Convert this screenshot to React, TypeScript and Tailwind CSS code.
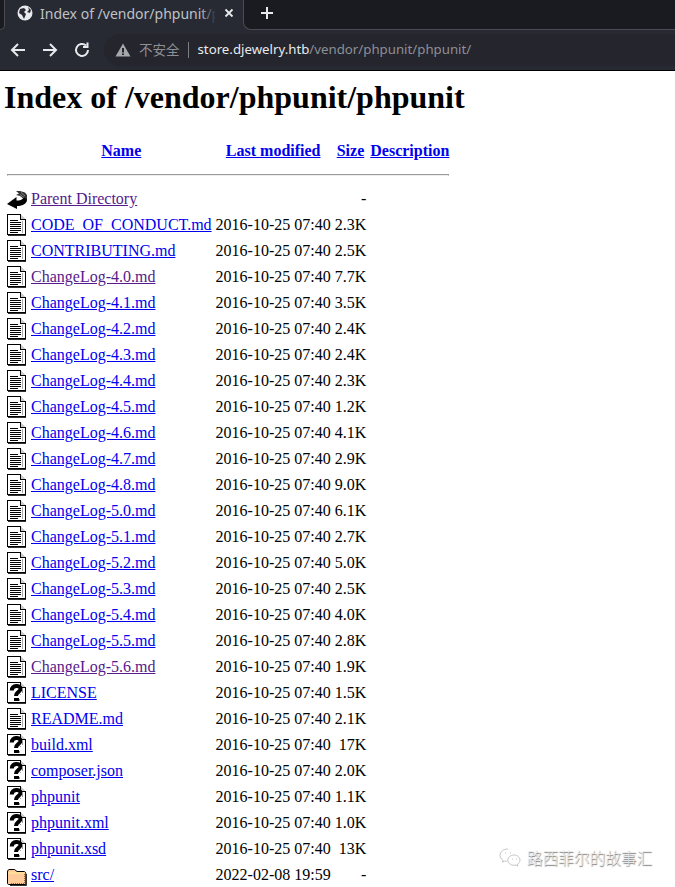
import React from "react";

type Kind = "text" | "unknown" | "back" | "folder" | "blank";

function FileOutline({ children }: { children?: React.ReactNode }) {
  return (
    <>
      <path d="M0.5 0.5H13.5L18.5 5.5V20.5H0.5Z" fill="#fff" stroke="#000" />
      <path d="M13.5 0.5V5.5H18.5" fill="#ccc" stroke="#000" />
      <path d="M1 21.5H19" stroke="#333" />
      {children}
    </>
  );
}

function Icon({ kind }: { kind: Kind }) {
  return (
    <svg width="20" height="22" viewBox="0 0 20 22" className="block" shapeRendering="crispEdges">
      {kind === "text" && (
        <FileOutline>
          <path d="M3 6.5H11M3 8.5H14M3 10.5H14M3 12.5H14M3 14.5H14M3 16.5H14M3 18.5H11" stroke="#000" />
          <path d="M15.5 7V19" stroke="#aaa" />
        </FileOutline>
      )}
      {kind === "unknown" && (
        <FileOutline>
          <path
            d="M4.8 8.5C4.5 3 13.5 2.5 13.5 7C13.5 10 9 10 9 14"
            fill="none"
            stroke="#000"
            strokeWidth="4"
            shapeRendering="auto"
          />
          <rect x="7" y="15.5" width="4.5" height="3.5" fill="#000" />
          <path d="M15.5 5.5V11M13 12V13M12 16.5V19" stroke="#999" />
        </FileOutline>
      )}
      {kind === "back" && (
        <g shapeRendering="auto">
          <path d="M9 3H13L18 4.5L20 7V12L16 10.5L13 8L9 7L12 5.5Z" fill="#333" />
          <path d="M14 4.5L18 8M13 6.5L17 9.5" stroke="#bbb" strokeWidth="0.6" />
          <path d="M0 16L9.5 9V12.5C13 12.5 15 12 17 9.5L20 11.5C20 15.5 16 18 10 18V21Z" fill="#000" />
        </g>
      )}
      {kind === "folder" && (
        <g shapeRendering="auto">
          <path d="M0.5 8C0.5 6 1.5 5.5 3 5.5H7.5L10 7.5H17C18 7.5 18.8 8.5 18.8 9.5V20.5H2C1 20.5 0.5 20 0.5 19Z" fill="#fc9" stroke="#000" />
          <path d="M1 9H17.5" stroke="#fe9" />
          <path d="M19.5 10V21.5H3" fill="none" stroke="#333" />
          <path d="M17.5 10V19.5H3" fill="none" stroke="#964" strokeDasharray="1 1" />
        </g>
      )}
    </svg>
  );
}

type Row = { name: string; date: string; size: string; kind: Kind; visited?: boolean };

const D = "2016-10-25 07:40";
const rows: Row[] = [
  { name: "Parent Directory", date: "\u00a0", size: "-", kind: "back", visited: true },
  { name: "CODE_OF_CONDUCT.md", date: D, size: "2.3K", kind: "text" },
  { name: "CONTRIBUTING.md", date: D, size: "2.5K", kind: "text" },
  { name: "ChangeLog-4.0.md", date: D, size: "7.7K", kind: "text", visited: true },
  { name: "ChangeLog-4.1.md", date: D, size: "3.5K", kind: "text" },
  { name: "ChangeLog-4.2.md", date: D, size: "2.4K", kind: "text" },
  { name: "ChangeLog-4.3.md", date: D, size: "2.4K", kind: "text" },
  { name: "ChangeLog-4.4.md", date: D, size: "2.3K", kind: "text" },
  { name: "ChangeLog-4.5.md", date: D, size: "1.2K", kind: "text" },
  { name: "ChangeLog-4.6.md", date: D, size: "4.1K", kind: "text" },
  { name: "ChangeLog-4.7.md", date: D, size: "2.9K", kind: "text" },
  { name: "ChangeLog-4.8.md", date: D, size: "9.0K", kind: "text" },
  { name: "ChangeLog-5.0.md", date: D, size: "6.1K", kind: "text" },
  { name: "ChangeLog-5.1.md", date: D, size: "2.7K", kind: "text" },
  { name: "ChangeLog-5.2.md", date: D, size: "5.0K", kind: "text" },
  { name: "ChangeLog-5.3.md", date: D, size: "2.5K", kind: "text" },
  { name: "ChangeLog-5.4.md", date: D, size: "4.0K", kind: "text" },
  { name: "ChangeLog-5.5.md", date: D, size: "2.8K", kind: "text" },
  { name: "ChangeLog-5.6.md", date: D, size: "1.9K", kind: "text", visited: true },
  { name: "LICENSE", date: D, size: "1.5K", kind: "unknown" },
  { name: "README.md", date: D, size: "2.1K", kind: "text" },
  { name: "build.xml", date: D, size: "17K", kind: "unknown" },
  { name: "composer.json", date: D, size: "2.0K", kind: "unknown" },
  { name: "phpunit", date: D, size: "1.1K", kind: "unknown" },
  { name: "phpunit.xml", date: D, size: "1.0K", kind: "unknown" },
  { name: "phpunit.xsd", date: D, size: "13K", kind: "unknown" },
  { name: "src/", date: "2022-02-08 19:59", size: "-", kind: "folder" },
];

function Nav({ d }: { d: string }) {
  return (
    <svg width="18" height="18" viewBox="0 0 18 18" fill="none" stroke="#e8eaed" strokeWidth="2">
      <path d={d} />
    </svg>
  );
}

function Chrome() {
  return (
    <div className="bg-[#282a33] font-['Noto_Sans','Noto_Sans_CJK_SC',sans-serif]">
      <div className="flex h-[30px]">
        <div className="h-full w-[5px] rounded-br-lg border-r border-b border-[#4b4c52] bg-[#1a1b20]" />
        <div className="flex h-full w-[238px] items-center pb-[4px] pl-[12px]">
          <svg width="16" height="16" viewBox="0 0 16 16">
            <circle cx="8" cy="8" r="7.5" fill="#e8eaed" />
            <path d="M3 4L7 3L9 5L7 7L9 9L7 14L5 10L2 8ZM11 2L14 5L13 8L10 7L12 5Z" fill="#282a33" />
          </svg>
          <div className="relative ml-[7px] mt-[2px] w-[176px] overflow-hidden text-[14px] leading-[20px] whitespace-nowrap text-[#bfc1c6]">
            Index of /vendor/phpunit/phpunit/
            <div className="absolute top-0 right-0 h-full w-[16px] bg-linear-to-r from-transparent to-[#282a33]" />
          </div>
          <svg width="10" height="10" viewBox="0 0 10 10" className="ml-[8px]" stroke="#e8eaed" strokeWidth="1.8">
            <path d="M1.5 1.5L8.5 8.5M8.5 1.5L1.5 8.5" />
          </svg>
        </div>
        <div className="flex h-full flex-1 items-center rounded-bl-lg border-b border-l border-[#4b4c52] bg-[#1a1b20] pb-[4px] pl-[16px]">
          <svg width="14" height="14" viewBox="0 0 14 14" stroke="#e8eaed" strokeWidth="2">
            <path d="M7 1V13M1 7H13" />
          </svg>
        </div>
      </div>
      <div className="flex h-[41px] items-center border-b border-black pl-[9px]">
        <Nav d="M16 9H3M9 3L3 9L9 15" />
        <div className="w-[14px]" />
        <Nav d="M2 9H15M9 3L15 9L9 15" />
        <div className="w-[14px]" />
        <Nav d="M15 9A6 6 0 1 1 13 4.5M14.5 1.5V6H10" />
        <div className="ml-[13px] flex h-[32px] flex-1 items-center rounded-l-full bg-[#24252d] pl-[11px]">
          <svg width="16" height="14" viewBox="0 0 16 14">
            <path d="M8 0.5L15.5 13.5H0.5Z" fill="#a5a7ab" />
            <path d="M7 5H9V9.5H7ZM7 10.5H9V12H7Z" fill="#24252d" />
          </svg>
          <span className="ml-[8px] text-[13.5px] text-[#8e9095]">不安全</span>
          <span className="ml-[8px] h-[16px] w-px bg-[#7c7e83]" />
          <span className="ml-[9px] text-[13.25px] whitespace-nowrap text-[#e8eaed]">
            store.djewelry.htb<span className="text-[#8e9095]">/vendor/phpunit/phpunit/</span>
          </span>
        </div>
      </div>
    </div>
  );
}

export default function App() {
  return (
    <div className="relative h-[887px] w-[675px] overflow-hidden bg-white">
      <Chrome />
      <div className="px-[4px] font-['Liberation_Serif',serif] text-[16px] leading-[normal] text-black">
        <h1 className="my-[8px] text-[32px] leading-[normal] font-bold">Index of /vendor/phpunit/phpunit</h1>
        <table className="mt-[21px] border-separate border-spacing-[2px]">
          <thead>
            <tr>
              <th className="p-px">
                <div className="h-[22px] w-[20px]" />
              </th>
              {["Name", "Last modified", "Size", "Description"].map((label) => (
                <th key={label} className="p-px text-center font-bold">
                  <a className="text-[#0000ee] underline">{label}</a>
                </th>
              ))}
            </tr>
            <tr>
              <th colSpan={5} className="p-px">
                <hr className="my-[8px] h-[2px] border border-[#9a9a9a] border-b-[#eeeeee]" />
              </th>
            </tr>
          </thead>
          <tbody>
            {rows.map((r) => (
              <tr key={r.name}>
                <td className="p-px align-top">
                  <Icon kind={r.kind} />
                </td>
                <td className="p-px">
                  <a className={r.visited ? "text-[#551a8b] underline" : "text-[#0000ee] underline"}>{r.name}</a>
                </td>
                <td className="p-px text-right">{r.date}</td>
                <td className="p-px text-right">{r.size}</td>
                <td className="p-px">{"\u00a0"}</td>
              </tr>
            ))}
          </tbody>
        </table>
      </div>
      <div className="absolute top-[847px] left-[499px] flex items-center gap-[6px]">
        <svg width="22" height="20" viewBox="0 0 22 20" fill="none" stroke="#b5b5b5" strokeWidth="0.8">
          <path d="M9 1C4.5 1 1 3.8 1 7.3C1 9.3 2.2 11 4 12.2L3.4 14.2L5.6 13C6.3 13.2 7 13.3 7.8 13.4" />
          <path d="M15 7C11.6 7 8.8 9.3 8.8 12.2C8.8 15 11.6 17.3 15 17.3C15.7 17.3 16.4 17.2 17 17L18.9 18.1L18.4 16.3C20 15.3 21 13.9 21 12.2C21 9.3 18.3 7 15 7Z" />
          <path d="M6 5H6.8M11 5H11.8M13 11H13.8M17 11H17.8" strokeWidth="1.2" />
        </svg>
        <span className="font-['Noto_Sans_CJK_SC',sans-serif] text-[15.7px] font-light leading-[22px] whitespace-nowrap text-[#eeeeee] [text-shadow:0.5px_0.5px_1px_#666]">
          路西菲尔的故事汇
        </span>
      </div>
    </div>
  );
}
